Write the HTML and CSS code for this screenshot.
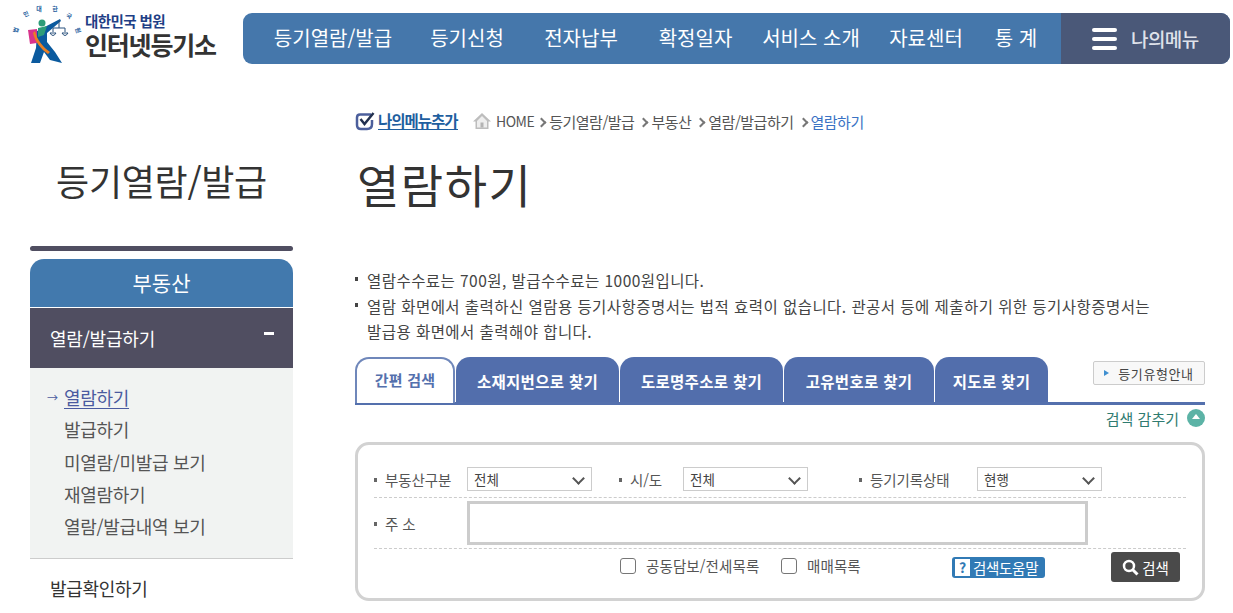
FILE: index.html
```html
<!DOCTYPE html>
<html lang="ko">
<head>
    <meta charset="UTF-8">
    <title>인터넷등기소 - 열람하기</title>
    <link rel="stylesheet" href="styles.css">
</head>
<body>
    <header class="top">
        <div class="logo">
            <svg class="logo-mark" width="80" height="64" viewBox="0 0 80 64">
                <g class="logo-arc">
                    <text x="39" y="11">대</text>
                    <text x="55" y="11">한</text>
                    <text x="27" y="16" transform="rotate(-25 27 16)">민</text>
                    <text x="68" y="18" transform="rotate(30 68 18)">국</text>
                    <text x="18" y="31" transform="rotate(-70 18 31)">법</text>
                    <text x="76" y="31" transform="rotate(70 76 31)">원</text>
                </g>
                <path d="M37 31 L60 19 L61 21 L47 33 L47 42 L55 52 L62 63 L50 60 L44 52 L40 63 L31 63 L36 48 Z" fill="#0b5a9e"/>
                <circle cx="42" cy="23" r="3.500" fill="#2d9c78"/>
                <path d="M38 28 L47 26 L44 35 L38 37 Z" fill="#2d9c78"/>
                <path d="M28 30 L37 29 L37 43 L30 44 Z" fill="#d8338c"/>
                <path d="M35 31 C37 40 43 47 50 52 L48 54 C41 49 35 42 33 33 Z" fill="#ec7f22"/>
                <g stroke="#28507c" stroke-width="1" fill="none">
                    <path d="M59 20 V28 M53 28 H65"/>
                    <path d="M53 28 V32 M65 28 V32"/>
                    <path d="M50 33 Q53 38 56 33 Z M62 33 Q65 38 68 33 Z"/>
                </g>
            </svg>
            <div class="logo-text">
                <span class="logo-small">대한민국 법원</span>
                <span class="logo-big">인터넷등기소</span>
            </div>
        </div>
        <nav class="gnb">
            <ul class="gnb-list">
                <li class="gnb-w1">등기열람/발급</li>
                <li class="gnb-w2">등기신청</li>
                <li class="gnb-w3">전자납부</li>
                <li class="gnb-w4">확정일자</li>
                <li class="gnb-w5">서비스 소개</li>
                <li class="gnb-w6">자료센터</li>
                <li class="gnb-w7">통 계</li>
            </ul>
            <div class="mymenu">
                <span class="burger"><i></i><i></i><i></i></span>
                <span>나의메뉴</span>
            </div>
        </nav>
    </header>

    <div class="wrap">
        <aside class="side">
            <h2 class="side-title">등기열람/발급</h2>
            <div class="side-bar"></div>
            <div class="side-head">부동산</div>
            <div class="side-open">
                <span>열람/발급하기</span>
                <span class="minus"></span>
            </div>
            <ul class="side-sub">
                <li class="on">열람하기</li>
                <li>발급하기</li>
                <li>미열람/미발급 보기</li>
                <li>재열람하기</li>
                <li>열람/발급내역 보기</li>
            </ul>
            <div class="side-item">발급확인하기</div>
        </aside>

        <main class="content">
            <div class="crumbs">
                <span class="addmenu">
                    <svg width="20" height="20" viewBox="0 0 20 20">
                        <path d="M16 3.500 H5 Q2 3.500 2 6.500 V14 Q2 18 6 18 H12 Q17 18 17 13 V9" fill="none" stroke="#4c5f9c" stroke-width="2.500"/>
                        <path d="M5.500 8 L9.500 13 L18.500 2" fill="none" stroke="#22304f" stroke-width="2.500"/>
                    </svg>
                    <b>나의메뉴추가</b>
                </span>
                <svg class="home" width="18" height="18" viewBox="0 0 18 18">
                    <path d="M9 1 L18 9.500 H15.500 V17 H2.500 V9.500 H0 Z" fill="#bdbdbd"/>
                    <path d="M9 4 L14 9 V15.500 H4 V9 Z" fill="#eeeeee"/>
                    <rect x="7.500" y="10.500" width="3" height="5" fill="#b4b4b4"/>
                </svg>
                <span class="crumb crumb-home">HOME</span>
                <span class="crumb">등기열람/발급</span>
                <span class="crumb">부동산</span>
                <span class="crumb">열람/발급하기</span>
                <span class="crumb crumb-now">열람하기</span>
            </div>

            <h1 class="page-title">열람하기</h1>

            <ul class="notes">
                <li>열람수수료는 700원, 발급수수료는 1000원입니다.</li>
                <li>열람 화면에서 출력하신 열람용 등기사항증명서는 법적 효력이 없습니다. 관공서 등에 제출하기 위한 등기사항증명서는<br>발급용 화면에서 출력해야 합니다.</li>
            </ul>

            <div class="tabs">
                <div class="tab tab-on">간편 검색</div>
                <div class="tab tab-2">소재지번으로 찾기</div>
                <div class="tab tab-3">도로명주소로 찾기</div>
                <div class="tab tab-4">고유번호로 찾기</div>
                <div class="tab tab-5">지도로 찾기</div>
                <button class="guide-btn"><span class="guide-arrow"></span>등기유형안내</button>
            </div>

            <div class="fold">
                <span>검색 감추기</span>
                <span class="fold-icon"></span>
            </div>

            <form class="search">
                <div class="row row-top">
                    <span class="lab lab-1">부동산구분</span>
                    <span class="sel">전체</span>
                    <span class="lab lab-2">시/도</span>
                    <span class="sel">전체</span>
                    <span class="lab lab-3">등기기록상태</span>
                    <span class="sel">현행</span>
                </div>
                <div class="row row-addr">
                    <span class="lab lab-1">주 소</span>
                    <div class="addr"></div>
                </div>
                <div class="row-bottom">
                    <label class="chk chk-1"><span class="box"></span>공동담보/전세목록</label>
                    <label class="chk chk-2"><span class="box"></span>매매목록</label>
                    <span class="help"><b class="help-q">?</b>검색도움말</span>
                    <span class="search-btn">
                        <svg width="17" height="17" viewBox="0 0 17 17">
                            <circle cx="7" cy="7" r="5" fill="none" stroke="#fff" stroke-width="2.500"/>
                            <path d="M10.500 10.500 L15.500 15.500" stroke="#fff" stroke-width="3"/>
                        </svg>
                        검색
                    </span>
                </div>
            </form>
        </main>
    </div>
</body>
</html>
```

FILE: styles.css
```css
* {
    margin: 0;
    padding: 0;
    box-sizing: border-box;
}

html, body {
    height: 613px;
    overflow: hidden;
}

body {
    font-family: "Noto Sans CJK KR", "Noto Sans", sans-serif;
    background-color: #fff;
    color: #333;
}

ul {
    list-style: none;
}

/* 상단 */
.top {
    display: flex;
    height: 64px;
    padding-top: 13px;
}

.logo {
    position: relative;
    width: 243px;
    height: 51px;
    display: flex;
}

.logo-mark {
    position: absolute;
    left: 0;
    top: -13px;
    overflow: visible;
}

.logo-arc text {
    font-size: 6px;
    font-weight: 700;
    fill: #1c5c9c;
    text-anchor: middle;
}

.logo-text {
    margin-left: 85px;
    display: flex;
    flex-direction: column;
}

.logo-small {
    font-size: 14.500px;
    line-height: 15px;
    font-weight: 700;
    color: #1f3f86;
    letter-spacing: -0.6px;
}

.logo-big {
    font-size: 25px;
    line-height: 33px;
    font-weight: 700;
    color: #333;
    letter-spacing: -1.2px;
}

.gnb {
    width: 987px;
    height: 51px;
    display: flex;
    background-color: #4577ab;
    border-radius: 9px;
    overflow: hidden;
}

.gnb-list {
    display: flex;
    width: 818px;
    color: #fff;
    font-size: 20px;
    line-height: 50px;
}

.gnb-list li {
    text-align: center;
    white-space: nowrap;
}

.gnb-w1 { width: 168px; padding-left: 12px; }
.gnb-w2 { width: 112px; }
.gnb-w3 { width: 116px; }
.gnb-w4 { width: 113px; }
.gnb-w5 { width: 118px; }
.gnb-w6 { width: 112px; }
.gnb-w7 { width: 68px; }

.mymenu {
    flex: 1;
    display: flex;
    align-items: center;
    gap: 14px;
    padding-left: 31px;
    background-color: #4a5878;
    color: #dfe2ea;
    font-size: 19px;
    font-weight: 500;
    letter-spacing: -0.6px;
}

.burger {
    display: flex;
    flex-direction: column;
    gap: 5px;
}

.burger i {
    display: block;
    width: 25px;
    height: 4px;
    border-radius: 2px;
    background-color: #fff;
}

.wrap {
    display: flex;
    padding-left: 30px;
}

/* 왼쪽 메뉴 */
.side {
    width: 263px;
    margin-right: 62px;
    flex-shrink: 0;
}

.side-title {
    height: 182px;
    padding-top: 89px;
    font-size: 36px;
    line-height: 54px;
    font-weight: 400;
    text-align: center;
    letter-spacing: -0.3px;
    color: #333;
    white-space: nowrap;
}

.side-bar {
    height: 5px;
    border-radius: 3px;
    background-color: #504e61;
    margin-bottom: 8px;
}

.side-head {
    height: 49px;
    border-bottom: 1px solid #fff;
    border-radius: 14px 14px 0 0;
    background-color: #4279ad;
    color: #fff;
    font-size: 21px;
    line-height: 46px;
    text-align: center;
}

.side-open {
    height: 60px;
    padding: 0 19px 0 20px;
    display: flex;
    align-items: center;
    justify-content: space-between;
    background-color: #504e61;
    color: #fff;
    font-size: 18px;
    letter-spacing: -0.2px;
}

.minus {
    width: 10px;
    height: 3px;
    margin-bottom: 10px;
    background-color: #fff;
}

.side-sub {
    height: 191px;
    padding: 13px 0 0 34px;
    background-color: #f1f3f2;
    border-bottom: 1px solid #ccc;
    font-size: 18px;
    line-height: 32.300px;
    color: #555;
    letter-spacing: -0.3px;
}

.side-sub .on {
    color: #4a5aa0;
    text-decoration: underline;
    text-underline-offset: 3px;
    position: relative;
}

.side-sub .on::before {
    content: "→";
    position: absolute;
    left: -17px;
    font-size: 11px;
    color: #4a5aa0;
}

.side-item {
    padding: 13px 0 0 20px;
    font-size: 18px;
    line-height: 32px;
    color: #333;
    letter-spacing: -0.3px;
}

/* 본문 */
.content {
    width: 850px;
}

.crumbs {
    height: 20px;
    margin-top: 47px;
    display: flex;
    align-items: center;
    font-size: 15px;
    letter-spacing: -0.5px;
    color: #555;
    white-space: nowrap;
}

.addmenu {
    display: flex;
    align-items: center;
    gap: 3px;
    width: 118px;
}

.addmenu b {
    color: #1f5f9f;
    font-size: 15.500px;
    letter-spacing: -1px;
    border-bottom: 1px solid #1f5f9f;
    line-height: 17px;
}

.home {
    margin-right: 5px;
}

.crumb::before {
    content: "";
    display: inline-block;
    width: 5px;
    height: 5px;
    margin: 0 4px 2px 0;
    border-top: 2px solid #777;
    border-right: 2px solid #777;
    transform: rotate(45deg);
}

.crumb {
    margin-right: 6px;
}

.crumb-home {
    font-size: 14px;
    margin-right: 4px;
}

.crumb-home::before {
    display: none;
}

.crumb-now {
    color: #3a72c4;
}

.page-title {
    height: 137px;
    padding: 19px 0 0 2px;
    font-size: 46px;
    line-height: 66px;
    font-weight: 400;
    color: #333;
    letter-spacing: 1.500px;
}

.notes {
    height: 89px;
    font-size: 15.500px;
    line-height: 25.500px;
    color: #444;
    letter-spacing: 0.45px;
    white-space: nowrap;
}

.notes li {
    position: relative;
    padding-left: 12px;
}

.notes li::before {
    content: "";
    position: absolute;
    left: 0;
    top: 9px;
    width: 3px;
    height: 4px;
    background-color: #444;
}

.tabs {
    position: relative;
    display: flex;
    height: 48px;
    border-bottom: 3px solid #5470ad;
}

.tab {
    height: 45px;
    margin-right: 1px;
    border-radius: 14px 14px 0 0;
    background-color: #526eac;
    color: #fff;
    font-size: 15.500px;
    font-weight: 700;
    letter-spacing: 0.3px;
    line-height: 48px;
    text-align: center;
    white-space: nowrap;
}

.tab-on {
    width: 100px;
    height: 46px;
    margin-bottom: -1px;
    border: 2px solid #6f87ba;
    border-bottom: 0;
    background-color: #fff;
    color: #5470ad;
    font-size: 15px;
    letter-spacing: 0.2px;
    line-height: 42px;
}

.tab-2, .tab-3 { width: 163px; }
.tab-4 { width: 150px; }
.tab-5 { width: 113px; }

.guide-btn {
    position: absolute;
    right: 0;
    top: 4px;
    width: 112px;
    height: 24px;
    display: flex;
    align-items: center;
    justify-content: center;
    gap: 9px;
    border: 1px solid #ccc;
    border-radius: 2px;
    background-color: #f8f8f8;
    font-family: inherit;
    font-size: 13px;
    color: #444;
    letter-spacing: 0.6px;
}

.guide-arrow {
    border-left: 5px solid #3f8fd0;
    border-top: 3.500px solid transparent;
    border-bottom: 3.500px solid transparent;
}

.fold {
    height: 37px;
    padding-top: 4px;
    display: flex;
    justify-content: flex-end;
    gap: 8px;
    font-size: 15px;
    line-height: 20px;
    color: #2f7b70;
}

.fold-icon {
    position: relative;
    width: 18px;
    height: 18px;
    border-radius: 50%;
    background-color: #5cb3a6;
}

.fold-icon::after {
    content: "";
    position: absolute;
    left: 5px;
    top: 5px;
    border-bottom: 5px solid #fff;
    border-left: 4px solid transparent;
    border-right: 4px solid transparent;
}

.search {
    height: 159px;
    padding: 21px 16px 0 16px;
    border: 3px solid #d2d2d2;
    border-radius: 14px;
    font-size: 14.500px;
    color: #555;
}

.row {
    display: flex;
    align-items: center;
    border-bottom: 1px dashed #ccc;
}

.row-top {
    height: 32px;
    padding-bottom: 5px;
}

.row-addr {
    height: 51px;
}

.lab {
    position: relative;
    padding-left: 11px;
    white-space: nowrap;
    letter-spacing: -0.1px;
}

.lab::before {
    content: "";
    position: absolute;
    left: 0;
    top: 9px;
    width: 3px;
    height: 4px;
    background-color: #666;
}

.lab-1 { width: 93px; }
.lab-2 { width: 64px; margin-left: 27px; }
.lab-3 { width: 118px; margin-left: 51px; }

.sel {
    position: relative;
    width: 125px;
    height: 24px;
    padding-left: 6px;
    border: 1px solid #ccc;
    font-size: 13.500px;
    line-height: 22px;
    color: #444;
}

.sel::after {
    content: "";
    position: absolute;
    right: 8px;
    top: 6px;
    width: 7px;
    height: 7px;
    border-right: 2px solid #555;
    border-bottom: 2px solid #555;
    transform: rotate(45deg);
}

.addr {
    width: 621px;
    height: 44px;
    border: 3px solid #ccc;
}

.row-bottom {
    position: relative;
    height: 34px;
}

.chk {
    position: absolute;
    top: 7px;
    display: flex;
    align-items: center;
    gap: 10px;
    line-height: 20px;
    letter-spacing: 0.1px;
    white-space: nowrap;
}

.chk-1 { left: 246px; }
.chk-2 { left: 407px; }

.box {
    width: 16px;
    height: 16px;
    border: 1px solid #767676;
    border-radius: 3px;
    background-color: #fff;
}

.help {
    position: absolute;
    left: 578px;
    top: 8px;
    width: 93px;
    height: 21px;
    display: flex;
    align-items: center;
    gap: 3px;
    padding-left: 3px;
    border-radius: 3px;
    background-color: #317ab5;
    color: #fff;
    font-size: 14.500px;
    letter-spacing: -0.3px;
    white-space: nowrap;
}

.help-q {
    width: 15px;
    height: 17px;
    background-color: #fff;
    color: #317ab5;
    font-size: 14px;
    line-height: 17px;
    text-align: center;
}

.search-btn {
    position: absolute;
    right: 6px;
    top: 3px;
    width: 69px;
    height: 30px;
    display: flex;
    align-items: center;
    justify-content: center;
    gap: 3px;
    border-radius: 3px;
    background-color: #4a4a4a;
    color: #fff;
    font-size: 14.500px;
}
```
